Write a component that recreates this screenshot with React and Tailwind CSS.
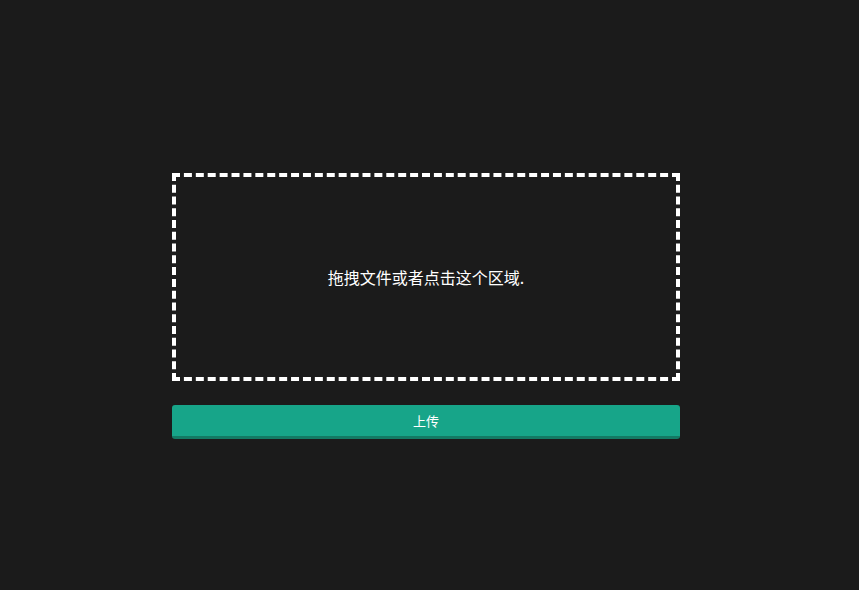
export default function App() {
  return (
    <div
      className="min-h-[590px] w-full bg-[#1b1b1b] pt-[173px]"
      style={{ fontFamily: '"Noto Sans CJK SC", "Noto Sans", sans-serif' }}
    >
      <div className="ml-[172px] flex w-[508px] flex-col gap-6">
        <div className="flex h-[208px] cursor-pointer items-center justify-center border-4 border-dashed border-white">
          <p className="text-[16px] text-white">拖拽文件或者点击这个区域.</p>
        </div>
        <button
          type="button"
          className="h-[34px] w-full rounded-[3px] border-b-[3px] border-[#137a64] bg-[#17a589] text-[13px] text-white"
        >
          上传
        </button>
      </div>
    </div>
  );
}
